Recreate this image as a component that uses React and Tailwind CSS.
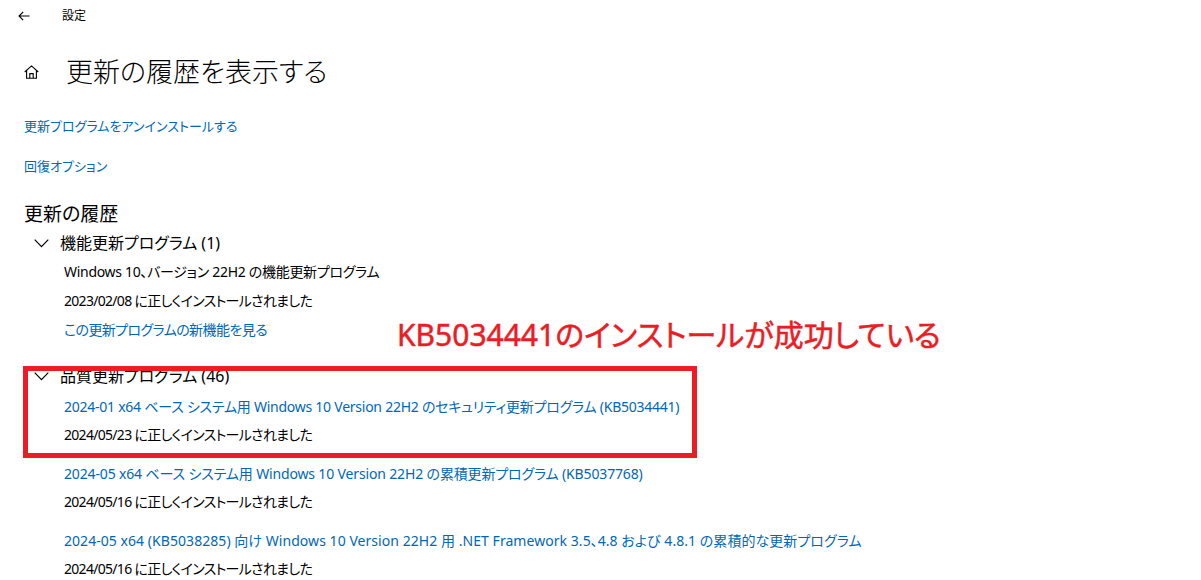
import { Fragment } from 'react'

const font = "font-['Noto_Sans','Noto_Sans_CJK_JP',sans-serif] [font-feature-settings:'palt']"

const quality = [
  { title: '2024-01 x64 ベース システム用 Windows 10 Version 22H2 のセキュリティ更新プログラム (KB5034441)', date: '2024/05/23', fit: 'tracking-[-0.25px]' },
  { title: '2024-05 x64 ベース システム用 Windows 10 Version 22H2 の累積更新プログラム (KB5037768)', date: '2024/05/16', fit: 'tracking-[-0.15px]' },
  { title: '2024-05 x64 (KB5038285) 向け Windows 10 Version 22H2 用 .NET Framework 3.5、4.8 および 4.8.1 の累積的な更新プログラム', date: '2024/05/16', fit: 'tracking-[0.05px]' },
]

function Chevron() {
  return (
    <svg width="15" height="9" viewBox="0 0 15 9" className="ml-[34px] shrink-0">
      <path d="M0.7 0.7 L7.5 7.7 L14.3 0.7" fill="none" stroke="#000" strokeWidth="1.2" />
    </svg>
  )
}

export default function App() {
  return (
    <div className={`relative w-[1201px] h-[580px] bg-white overflow-hidden text-black ${font}`}>
      {/* title bar */}
      <div className="flex items-center h-[32px]">
        <svg width="12" height="10" viewBox="0 0 12 10" className="ml-[18px]">
          <path d="M11.5 5 H1 M5.2 0.8 L1 5 L5.2 9.2" fill="none" stroke="#000" strokeWidth="1.1" />
        </svg>
        <span className="ml-[32px] text-[12px] leading-none">設定</span>
      </div>

      {/* page header */}
      <div className="flex items-center h-[34px] mt-[22px]">
        <svg width="15" height="14" viewBox="0 0 15 14" className="ml-[24px] mt-[1px]">
          <path d="M0.7 7 L7.5 0.9 L14.3 7 M2.6 5.4 V13.3 H12.4 V5.4 M5.8 13.3 V8.6 H9.2 V13.3" fill="none" stroke="#000" strokeWidth="1.1" />
        </svg>
        <h1 className="ml-[27px] text-[27px] font-light leading-none">更新の履歴を表示する</h1>
      </div>

      <div className="pl-[24px]">
        <div className="h-[20px] mt-[29px] flex items-center text-[13px] text-[#0067b8]">更新プログラムをアンインストールする</div>
        <div className="h-[20px] mt-[20px] flex items-center text-[13px] text-[#0067b8]">回復オプション</div>
        <h2 className="h-[28px] mt-[23px] flex items-center text-[19px]">更新の履歴</h2>
      </div>

      {/* feature updates */}
      <div className="h-[26px] mt-[2px] flex items-center">
        <Chevron />
        <span className="ml-[11px] text-[16px]">機能更新プログラム (1)</span>
      </div>
      <div className="pl-[64px] text-[14px]">
        <div className="h-[29px] mt-[1px] flex items-center tracking-[-0.3px]">Windows 10、バージョン 22H2 の機能更新プログラム</div>
        <div className="h-[29px] flex items-center tracking-[-0.7px]">2023/02/08 に正しくインストールされました</div>
        <div className="h-[29px] flex items-center text-[#0067b8] tracking-[-0.6px]">この更新プログラムの新機能を見る</div>
      </div>

      {/* quality updates */}
      <div className="h-[26px] mt-[19px] flex items-center">
        <Chevron />
        <span className="ml-[11px] text-[16px]">品質更新プログラム (46)</span>
      </div>
      <div className="pl-[64px] text-[14px] mt-[3px]">
        {quality.map((q, i) => (
          <Fragment key={i}>
            <div className={`h-[28px] flex items-center text-[#0067b8] whitespace-nowrap ${q.fit} ${i > 0 ? 'mt-[11px]' : ''}`}>{q.title}</div>
            <div className="h-[28px] flex items-center tracking-[-0.7px]">{q.date} に正しくインストールされました</div>
          </Fragment>
        ))}
      </div>

      {/* annotation */}
      <div className="absolute left-[23px] top-[366px] w-[674px] h-[92px] border-[5px] border-[#ed1c24]" />
      <div className="absolute left-[397px] top-[318px] text-[30px] leading-[34px] font-normal text-[#ec1c24] [-webkit-text-stroke:0.5px_#ec1c24] whitespace-nowrap">
        KB5034441のインストールが成功している
      </div>
    </div>
  )
}
